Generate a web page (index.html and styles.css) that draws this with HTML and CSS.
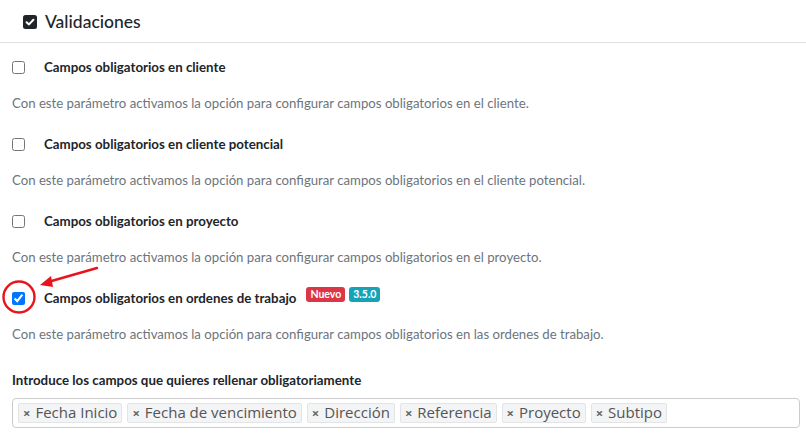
FILE: index.html
```html
<!DOCTYPE html>
<html lang="es">
<head>
    <meta charset="UTF-8">
    <title>Validaciones</title>
    <link rel="stylesheet" href="styles.css">
</head>
<body>
    <div class="panel">
        <div class="panel-head">
            <svg class="head-icon" width="14" height="14" viewBox="0 0 14 14">
                <rect x="0" y="0" width="14" height="14" rx="2.5" fill="#212529"/>
                <path d="M3.6 7.2 L6 9.4 L10.4 4.8" fill="none" stroke="#fff" stroke-width="2" stroke-linecap="round" stroke-linejoin="round"/>
            </svg>
            <span>Validaciones</span>
        </div>

        <div class="panel-body">
            <div class="param">
                <label class="check"><input type="checkbox"><span>Campos obligatorios en cliente</span></label>
                <p class="help">Con este parámetro activamos la opción para configurar campos obligatorios en el cliente.</p>
            </div>
            <div class="param">
                <label class="check"><input type="checkbox"><span>Campos obligatorios en cliente potencial</span></label>
                <p class="help">Con este parámetro activamos la opción para configurar campos obligatorios en el cliente potencial.</p>
            </div>
            <div class="param">
                <label class="check"><input type="checkbox"><span>Campos obligatorios en proyecto</span></label>
                <p class="help">Con este parámetro activamos la opción para configurar campos obligatorios en el proyecto.</p>
            </div>
            <div class="param highlighted">
                <label class="check"><input type="checkbox" checked><span>Campos obligatorios en ordenes de trabajo</span>
                    <span class="badge badge-new">Nuevo</span><span class="badge badge-version">3.5.0</span>
                </label>
                <p class="help">Con este parámetro activamos la opción para configurar campos obligatorios en las ordenes de trabajo.</p>
                <!-- annotation drawn over the checkbox -->
                <svg class="mark" width="110" height="60" viewBox="0 0 110 60">
                    <circle cx="19" cy="39" r="15.5" fill="none" stroke="#e8141b" stroke-width="2.4"/>
                    <line x1="97" y1="10" x2="48" y2="24" stroke="#e8141b" stroke-width="2.4" stroke-linecap="round"/>
                    <polygon points="40,27 51,18 53,29" fill="#e8141b"/>
                </svg>
            </div>

            <div class="field">
                <label class="field-label">Introduce los campos que quieres rellenar obligatoriamente</label>
                <div class="tags">
                    <span class="tag"><b>×</b>Fecha Inicio</span>
                    <span class="tag"><b>×</b>Fecha de vencimiento</span>
                    <span class="tag"><b>×</b>Dirección</span>
                    <span class="tag"><b>×</b>Referencia</span>
                    <span class="tag"><b>×</b>Proyecto</span>
                    <span class="tag"><b>×</b>Subtipo</span>
                </div>
            </div>
        </div>
    </div>
</body>
</html>
```

FILE: styles.css
```css
body {
    margin: 0;
    font-family: Lato, 'Open Sans', sans-serif;
    color: #212529;
    background: #fff;
}

.panel-head {
    height: 43px;
    border-bottom: 1px solid #dee2e6;
    display: flex;
    align-items: center;
    padding-left: 23px;
    font-size: 17.5px;
    font-weight: 500;
    box-sizing: border-box;
}

.head-icon {
    margin-right: 8px;
    margin-top: 1px;
}

.panel-body {
    padding: 14px 6px 0 12px;
}

.param {
    position: relative;
    height: 77px;
}

.check {
    display: flex;
    align-items: center;
    height: 20px;
    font-size: 13.3px;
    font-weight: 700;
}

.check input {
    width: 13px;
    height: 13px;
    margin: 0 19px 0 0;
}

.help {
    margin: 16px 0 0;
    line-height: 20px;
    font-size: 13.2px;
    color: #6c757d;
}

.badge {
    display: inline-block;
    color: #fff;
    font-size: 10.5px;
    font-weight: 700;
    line-height: 15px;
    padding: 0 4px;
    border-radius: 3px;
    margin-top: -8px;
}

.badge-new {
    background: #dc3545;
    margin-left: 10px;
}

.badge-version {
    background: #17a2b8;
    margin-left: 4px;
}

.mark {
    position: absolute;
    left: -12px;
    top: -30px;
}

.field {
    margin-top: 5px;
}

.field-label {
    display: block;
    font-size: 13.3px;
    font-weight: 700;
    line-height: 20px;
}

.tags {
    margin-top: 8px;
    height: 30px;
    border: 1px solid #ccc;
    border-radius: 4px;
    box-sizing: border-box;
    display: flex;
    align-items: center;
    gap: 5px;
    padding-left: 5px;
}

.tag {
    background: #f3f4f5;
    border: 1px solid #e2e4e6;
    border-radius: 2px;
    color: #555;
    font-family: 'Open Sans', sans-serif;
    font-size: 15px;
    line-height: 17px;
    padding: 0 4px;
}

.tag b {
    color: #666;
    font-size: 13px;
    margin-right: 5px;
}
```
